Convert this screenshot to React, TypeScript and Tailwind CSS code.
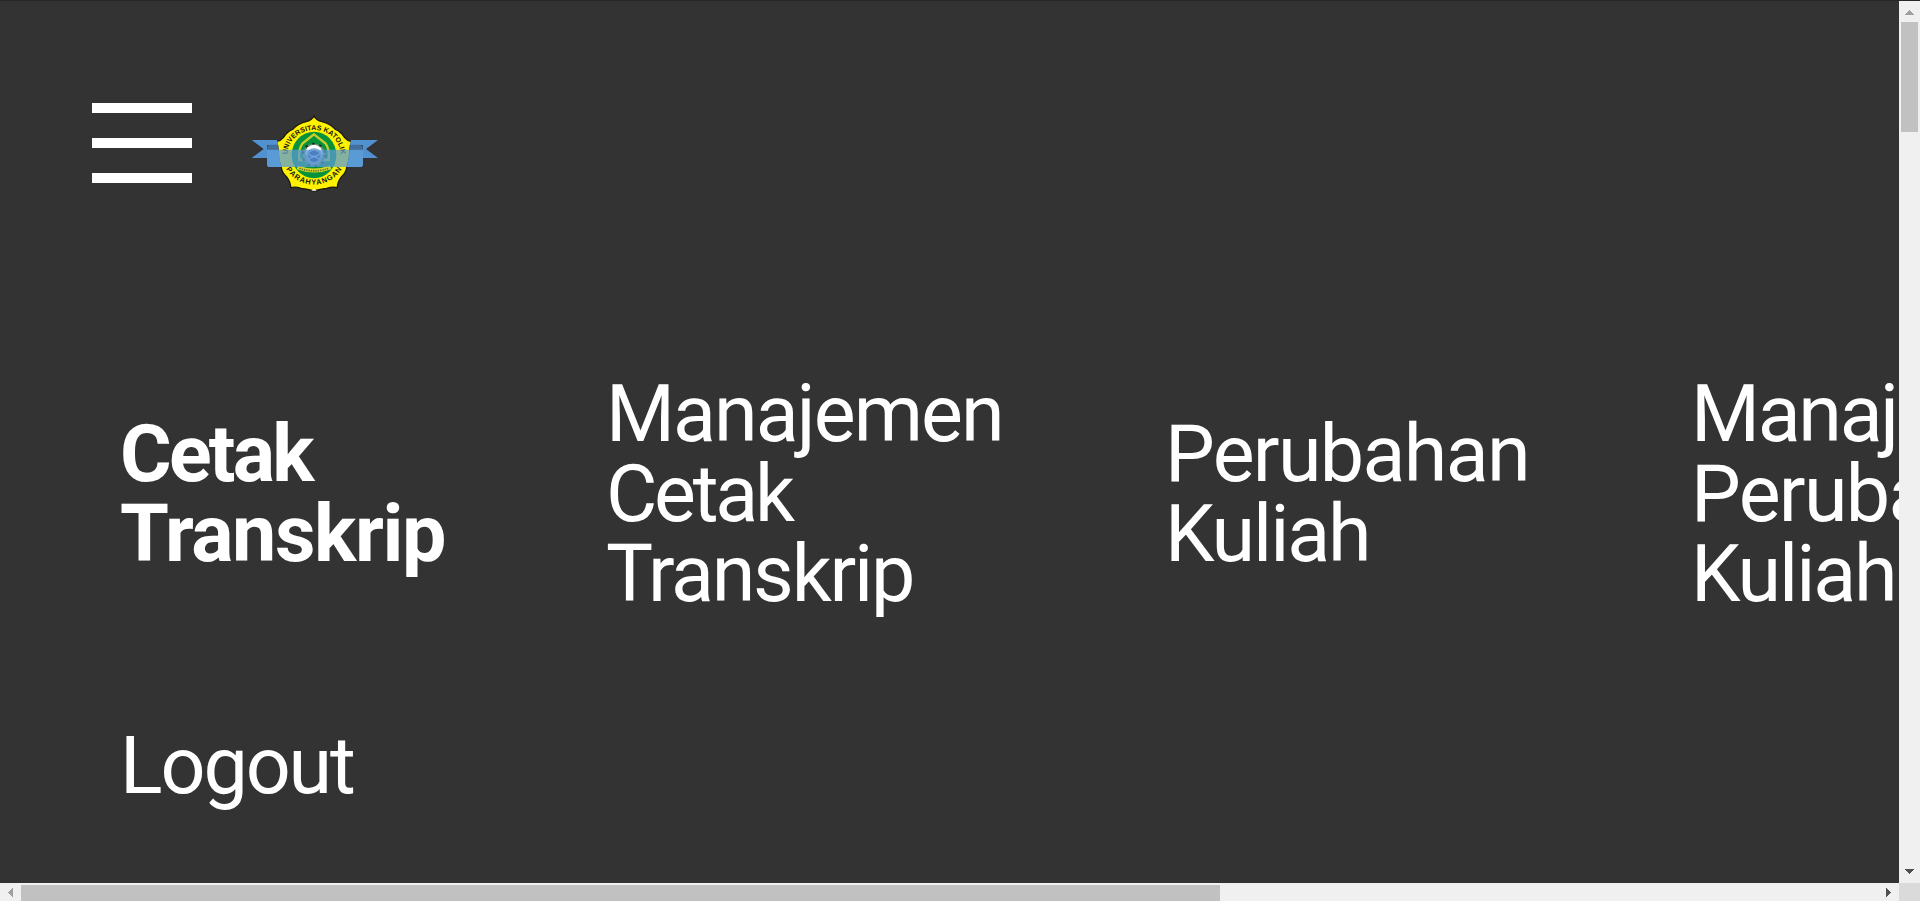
import React from "react";

type Line = { text: string; tracking: string };
type Item = { lines: Line[]; width: string; active?: boolean };

const menu: Item[] = [
  {
    active: true,
    width: "w-[486px]",
    lines: [
      { text: "Cetak", tracking: "tracking-[-2.8px]" },
      { text: "Transkrip", tracking: "tracking-[-1.4px]" },
    ],
  },
  {
    width: "w-[559px]",
    lines: [
      { text: "Manajemen", tracking: "tracking-[-1.94px]" },
      { text: "Cetak", tracking: "tracking-[-3.3px]" },
      { text: "Transkrip", tracking: "tracking-[-2.24px]" },
    ],
  },
  {
    width: "w-[526px]",
    lines: [
      { text: "Perubahan", tracking: "tracking-[-1.68px]" },
      { text: "Kuliah", tracking: "tracking-[-2.1px]" },
    ],
  },
  {
    width: "w-[559px]",
    lines: [
      { text: "Manajemen", tracking: "tracking-[-2.3px]" },
      { text: "Perubahan", tracking: "tracking-[-1.68px]" },
      { text: "Kuliah", tracking: "tracking-[-2.1px]" },
    ],
  },
];

const logout: Item = {
  width: "w-[486px]",
  lines: [{ text: "Logout", tracking: "tracking-[-2.1px]" }],
};

function MenuLink({ item }: { item: Item }) {
  return (
    <a className={`block shrink-0 ${item.width} ${item.active ? "font-bold" : "font-normal"}`}>
      {item.lines.map((line) => (
        <span key={line.text} className={`block whitespace-nowrap ${line.tracking}`}>
          {line.text}
        </span>
      ))}
    </a>
  );
}

function MenuIcon() {
  return (
    <div className="flex w-[100px] flex-col gap-[25px]">
      <div className="h-2.5 bg-white" />
      <div className="h-2.5 bg-white" />
      <div className="h-2.5 bg-white" />
    </div>
  );
}

function Logo() {
  return (
    <svg viewBox="0 0 450 300" className="h-[100px] w-[150px]" role="img">
      <defs>
        <path id="arcTop" d="M142 150 A80 75 0 0 1 302 150" />
        <path id="arcBottom" d="M136 188 A98 98 0 0 0 308 188" />
      </defs>
      <path
        d="M222 33 Q228 46 246 50 Q272 57 286 73 Q304 80 314 98 Q322 108 335 110 Q330 120 329 146 Q328 170 320 188 Q318 204 304 216 Q292 232 292 248 Q278 244 260 250 Q240 252 222 258 Q204 252 184 250 Q166 244 152 248 Q152 232 140 216 Q126 204 124 188 Q116 170 115 146 Q114 120 109 110 Q122 108 130 98 Q140 80 158 73 Q172 57 198 50 Q216 46 222 33Z"
        fill="#fff200"
        stroke="#1c1a10"
        strokeWidth="4"
      />
      <ellipse cx="222" cy="150" rx="67" ry="70" fill="#07923c" />
      <path d="M222 88 L257 116 Q270 134 266 165 H178 Q174 134 187 116Z" fill="#07923c" stroke="#c9cf28" strokeWidth="7" />
      <path d="M222 97 L248 121 H196Z" fill="#07923c" />
      <circle cx="222" cy="150" r="34" fill="#6f8f70" stroke="#222" strokeWidth="6" strokeDasharray="7 15" />
      <circle cx="222" cy="145" r="26" fill="#fff" />
      <circle cx="222" cy="154" r="24" fill="#8aa6cf" />
      <circle cx="222" cy="154" r="17" fill="#1c2c86" />
      <path d="M206 147 Q222 162 238 147 M206 163 Q222 148 238 163" fill="none" stroke="#a9c4ea" strokeWidth="4" />
      <path d="M172 187 Q222 206 272 187" fill="none" stroke="#d6d629" strokeWidth="12" />
      <path d="M178 190 Q222 205 266 190" fill="none" stroke="#697419" strokeWidth="5" strokeDasharray="4 3" />
      <text fontFamily="Liberation Sans, sans-serif" fontWeight="700" fontSize="21" fill="#15150a">
        <textPath href="#arcTop" startOffset="50%" textAnchor="middle" textLength="240">
          UNIVERSITAS KATOLIK
        </textPath>
      </text>
      <text fontFamily="Liberation Sans, sans-serif" fontWeight="700" fontSize="22" fill="#15150a">
        <textPath href="#arcBottom" startOffset="50%" textAnchor="middle" textLength="200">
          PARAHYANGAN
        </textPath>
      </text>
      <path d="M35 105 H111 L114 120 H82 V159 H35 L71 132Z M414 105 H333 L330 120 H368 V159 H414 L378 132Z" fill="#5291d0" />
      <path d="M82 134 Q82 119 92 119 H115 V134Z M368 134 Q368 119 358 119 H329 V134Z" fill="#416f9f" />
      <path d="M81 134 H369 V178 Q369 186 361 186 H89 Q81 186 81 178Z" fill="#5b9bd5" fillOpacity="0.75" />
      <path d="M81 134 H116 Q118 168 124 186 H89 Q81 186 81 178Z M369 134 H329 Q327 168 320 186 H361 Q369 186 369 178Z" fill="#5b9bd5" />
      <path d="M214 257 L222 251 L230 257Z" fill="#fff" />
    </svg>
  );
}

function Arrow({ points, fill }: { points: string; fill: string }) {
  return (
    <svg viewBox="0 0 21 21" className="size-[21px] shrink-0" shapeRendering="crispEdges">
      <polygon points={points} fill={fill} />
    </svg>
  );
}

export default function App() {
  return (
    <div className="grid h-[901px] w-[1920px] grid-cols-[1899px_21px] grid-rows-[1px_882px_18px] overflow-hidden bg-[#f0f0f0]">
      <div className="col-span-2 bg-[#272727]" />

      <main className="overflow-hidden bg-[#333333] text-white">
        <header className="flex h-[373px] items-start pl-[92px] pt-[102px]">
          <MenuIcon />
          <div className="ml-12 mt-0.5">
            <Logo />
          </div>
        </header>
        <nav className="pl-[120px] font-['Roboto',sans-serif] text-[79px] leading-[80px]">
          <div className="flex h-[240px] items-center">
            {menu.map((item, i) => (
              <MenuLink key={i} item={item} />
            ))}
          </div>
          <div className="flex pt-28">
            <MenuLink item={logout} />
          </div>
        </nav>
      </main>

      <div className="flex flex-col items-center justify-between">
        <Arrow points="6,14 10.5,9 15,14" fill="#a0a0a0" />
        <div className="mr-px h-[110px] w-[17px] bg-[#c1c1c1]" />
        <div className="flex-1" />
        <Arrow points="6,7 15,7 10.5,12" fill="#505050" />
      </div>

      <div className="flex items-center justify-between">
        <Arrow points="13,6 8,10.5 13,15" fill="#a0a0a0" />
        <div className="mt-0.5 h-4 w-[1199px] bg-[#c1c1c1]" />
        <div className="flex-1" />
        <Arrow points="8,6 13,10.5 8,15" fill="#505050" />
      </div>

      <div className="bg-[#dadada]" />
    </div>
  );
}
